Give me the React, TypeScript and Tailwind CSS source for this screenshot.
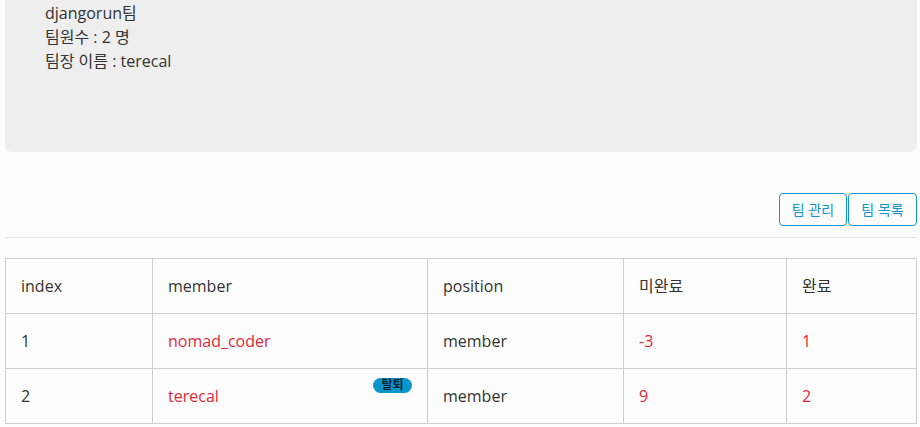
import React from 'react';

const FONT = "font-['Open_Sans','Noto_Sans_CJK_KR',sans-serif]";

const members = [
    { index: 1, name: 'nomad_coder', position: 'member', todo: -3, done: 1, left: false },
    { index: 2, name: 'terecal', position: 'member', todo: 9, done: 2, left: true },
];

const App: React.FC = () => {
    return (
        <div className={`${FONT} min-h-screen bg-[#fdfdfd] pl-[5px] pr-[3px] text-[16px] text-[#333]`}>
            {/* Team info */}
            <div className="h-[152px] rounded-b-[7px] bg-[#eeeeee] pl-[40px] pt-px leading-[24px]">
                <div>djangorun팀</div>
                <div>팀원수 : 2 명</div>
                <div>팀장 이름 : terecal</div>
            </div>

            {/* Actions */}
            <div className="mt-[41px] flex justify-end">
                <button className="h-[33px] w-[68px] rounded-[4px] border border-[#0e97cf] text-[14px] text-[#0e97cf]">
                    팀 관리
                </button>
                <button className="ml-px h-[33px] w-[69px] rounded-[4px] border border-[#0e97cf] text-[14px] text-[#0e97cf]">
                    팀 목록
                </button>
            </div>

            <div className="mt-[11px] h-px bg-[#e2e2e2]" />

            {/* Member table */}
            <table className="mt-[20px] w-full table-fixed border-collapse">
                <colgroup>
                    <col className="w-[147px]" />
                    <col className="w-[275px]" />
                    <col className="w-[196px]" />
                    <col className="w-[163px]" />
                    <col />
                </colgroup>
                <thead>
                    <tr className="h-[55px]">
                        <th className="border border-[#cfcfcf] px-[15px] text-left font-normal">index</th>
                        <th className="border border-[#cfcfcf] px-[15px] text-left font-normal">member</th>
                        <th className="border border-[#cfcfcf] px-[15px] text-left font-normal">position</th>
                        <th className="border border-[#cfcfcf] px-[15px] text-left font-normal">미완료</th>
                        <th className="border border-[#cfcfcf] px-[15px] text-left font-normal">완료</th>
                    </tr>
                </thead>
                <tbody>
                    {members.map((m) => (
                        <tr key={m.index} className="h-[55px]">
                            <td className="border border-[#cfcfcf] px-[15px]">{m.index}</td>
                            <td className="border border-[#cfcfcf] px-[15px]">
                                <div className="flex items-center justify-between">
                                    <span className="text-[#e3283a]">{m.name}</span>
                                    {m.left && (
                                        <span className="-mt-[22px] flex h-[15px] w-[39px] items-center justify-center rounded-full bg-[#0896cc] text-[12px] font-bold leading-none text-[#0b2433]">
                                            탈퇴
                                        </span>
                                    )}
                                </div>
                            </td>
                            <td className="border border-[#cfcfcf] px-[15px]">{m.position}</td>
                            <td className="border border-[#cfcfcf] px-[15px] text-[#e3283a]">{m.todo}</td>
                            <td className="border border-[#cfcfcf] px-[15px] text-[#e3283a]">{m.done}</td>
                        </tr>
                    ))}
                </tbody>
            </table>
        </div>
    );
};

export default App;
